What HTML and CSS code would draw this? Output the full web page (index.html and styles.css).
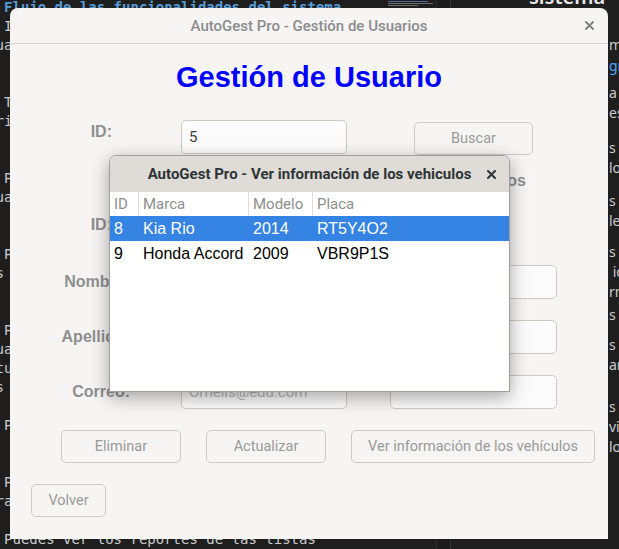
FILE: index.html
```html
<!DOCTYPE html>
<html lang="es">
<head>
<meta charset="utf-8">
<title>AutoGest Pro - Gestión de Usuarios</title>
<link rel="stylesheet" href="styles.css">
</head>
<body>
<div class="desktop">
  <div class="editor">
    <div class="code">
      <div class="minimap"><span class="mm-blue"></span><span class="mm-gray"></span><span class="mm-gray short"></span></div>
      <div class="code-lines">
        <div class="ln h"> Flujo de las funcionalidades del sistema</div>
        <div class="ln"> Inicia sesión en el sistema con tu usuario</div>
        <div class="ln">uario y contraseña registrados previamente.</div>
        <div class="ln"></div>
        <div class="ln"></div>
        <div class="ln"> Tras iniciar sesión accede al menú principal</div>
        <div class="ln">rio desde donde puedes gestionar los módulos.</div>
        <div class="ln"></div>
        <div class="ln"></div>
        <div class="ln"> Para registrar un nuevo usuario ingresa sus</div>
        <div class="ln">ua datos y presiona el botón Guardar.</div>
        <div class="ln"></div>
        <div class="ln"></div>
        <div class="ln"> Puedes buscar un usuario por su ID y modificar</div>
        <div class="ln">s datos.</div>
        <div class="ln"></div>
        <div class="ln"></div>
        <div class="ln"> Para eliminar un usuario selecciona el registro</div>
        <div class="ln">ua correspondiente y presiona el botón Eliminar,</div>
        <div class="ln">tu información se borrará del sistema junto con</div>
        <div class="ln">s vehículos asociados.</div>
        <div class="ln"></div>
        <div class="ln"> Puedes ver la información de los vehículos.</div>
        <div class="ln"></div>
        <div class="ln"></div>
        <div class="ln"> Para volver al menú principal presiona el botón</div>
        <div class="ln">ra Volver.</div>
        <div class="ln"></div>
        <div class="ln"> Puedes ver los reportes de las listas</div>
      </div>
    </div>
    <div class="gutter"></div>
    <div class="preview">
      <div class="pv-title">sistema</div>
      <p class="pv m26">mentar</p>
      <p class="pv m1 link">grama</p>
      <p class="pv m7">a el</p>
      <p class="pv">es</p>
      <p class="pv m15">s r</p>
      <p class="pv">lo</p>
      <p class="pv m13">s i</p>
      <p class="pv">le</p>
      <p class="pv m11">s g</p>
      <p class="pv"> id</p>
      <p class="pv">rm</p>
      <p class="pv m3">s g</p>
      <p class="pv m10">s e</p>
      <p class="pv">ar</p>
      <p class="pv m22">s v</p>
      <p class="pv">viz</p>
      <p class="pv">lo</p>
    </div>
  </div>

  <section class="window main-win">
    <header class="titlebar">
      <span></span>
      <span class="title">AutoGest Pro - Gestión de Usuarios</span>
      <span class="close"><svg width="9" height="9" viewBox="0 0 9 9"><path d="M1 1L8 8M8 1L1 8" stroke="#7e7e7e" stroke-width="1.8" stroke-linecap="round"/></svg></span>
    </header>
    <div class="win-body">
      <h1 class="heading">Gestión de Usuario</h1>
      <div class="form">
        <div class="lbl id-lbl ra">ID:</div>
        <div class="field rowa c2">5</div>
        <button class="btn search">Buscar</button>

        <div class="lbl sub">Nuevos datos</div>

        <div class="lbl id-lbl rc">ID:</div>

        <div class="lbl rd">Nombre:</div>
        <div class="field rd c2"></div>
        <div class="field wide rd c3"></div>

        <div class="lbl re">Apellido:</div>
        <div class="field re c2"></div>
        <div class="field wide re c3"></div>

        <div class="lbl rf">Correo:</div>
        <div class="field rf c2 ph">Ornelis@edu.com</div>
        <div class="field wide rf c3"></div>
      </div>
      <div class="actions">
        <button class="btn w120">Eliminar</button>
        <button class="btn w120">Actualizar</button>
        <button class="btn w244">Ver información de los vehículos</button>
      </div>
      <div class="back">
        <button class="btn w75">Volver</button>
      </div>
    </div>
  </section>

  <section class="window dialog">
    <header class="dlg-titlebar">
      <span></span>
      <span class="dlg-title">AutoGest Pro - Ver información de los vehiculos</span>
      <span class="dlg-close"><svg width="9" height="9" viewBox="0 0 9 9"><path d="M1 1L8 8M8 1L1 8" stroke="#2e3436" stroke-width="2" stroke-linecap="round"/></svg></span>
    </header>
    <table class="grid">
      <colgroup><col class="cid"><col class="cmarca"><col class="cmodelo"><col></colgroup>
      <thead>
        <tr><th>ID</th><th class="sep">Marca</th><th class="sep">Modelo</th><th class="sep">Placa</th></tr>
      </thead>
      <tbody>
        <tr class="sel"><td>8</td><td class="sep">Kia Rio</td><td class="sep">2014</td><td class="sep">RT5Y4O2</td></tr>
        <tr><td>9</td><td class="sep">Honda Accord</td><td class="sep">2009</td><td class="sep">VBR9P1S</td></tr>
      </tbody>
    </table>
  </section>
</div>
</body>
</html>
```

FILE: styles.css
```css
* { box-sizing: border-box; margin: 0; padding: 0; }
html, body { width: 619px; height: 549px; overflow: hidden; }
body { background: #1e1e1e; font-family: Roboto, "Noto Sans", sans-serif; }

.desktop { position: relative; width: 619px; height: 549px; overflow: hidden; }

/* background editor */
.editor { display: flex; height: 549px; }
.code { position: relative; width: 437px; flex: none; border-right: 1px solid #2e2e2e; overflow: hidden; }
.code-lines { margin: -2px 0 0 -4.4px; font: 14px/19px "DejaVu Sans Mono", monospace; color: #cccccc; }
.ln { height: 19px; white-space: pre; }
.ln.h { color: #569cd6; font-weight: bold; }
.minimap { position: absolute; left: 388px; top: 0; width: 45px; height: 7px; display: flex; flex-direction: column; gap: 1px; padding-top: 1px; }
.minimap span { display: block; height: 1px; }
.mm-blue { background: #4a6f95; width: 40px; }
.mm-gray { background: #6a6a6a; width: 45px; }
.mm-gray.short { width: 30px; }
.gutter { width: 14px; flex: none; border-right: 1px solid #333333; background: #1b1b1b; }
.preview { flex: 1; padding-left: 158px; font: 14px/20px "Noto Sans", sans-serif; color: #cccccc; overflow: hidden; }
.pv-title { margin: -15px 0 0 -80px; font: 600 20px/24px "Noto Sans", sans-serif; color: #e8e8e8; white-space: nowrap; }
.pv { height: 20px; white-space: pre; }
.pv.link { color: #4daafc; }
.m1 { margin-top: 1px; } .m3 { margin-top: 3px; } .m7 { margin-top: 7px; } .m10 { margin-top: 10px; }
.m11 { margin-top: 11px; } .m13 { margin-top: 13px; } .m15 { margin-top: 15px; } .m22 { margin-top: 22px; }
.m26 { margin-top: 26px; }

/* windows */
.window { position: absolute; background: #f6f5f4; }
.main-win { left: 10px; top: 8px; width: 598px; height: 531px; border-radius: 8px 8px 0 0; overflow: hidden; }
.titlebar { height: 36px; border-bottom: 1px solid #d9d5d1; display: grid; grid-template-columns: 1fr auto 1fr; align-items: center; }
.title { font: 500 15px Roboto, sans-serif; color: #8c8c8c; }
.close { justify-self: end; margin-right: 14px; display: flex; }

.win-body { padding-top: 18px; }
.heading { font: bold 29px/30px "Liberation Sans", Arial, sans-serif; color: #0000ff; text-align: center; }

.form { display: grid; grid-template-columns: 141px 209px 167px; grid-template-rows: 34px 20px 28px 34px 34px 34px; row-gap: 21px; margin: 28px 0 0 30px; }
.lbl { font: bold 16px/18px "Liberation Sans", Arial, sans-serif; color: #8f8f8f; justify-self: end; align-self: center; margin-right: 51px; grid-column: 1; white-space: nowrap; }
.id-lbl { margin-right: 69px; }
.ra { grid-row: 1; align-self: start; margin-top: 3px; }
.rc { grid-row: 3; align-self: start; }
.sub { grid-row: 2; grid-column: 3; justify-self: center; align-self: start; margin: -3px 0 0 0; }
.rd { grid-row: 4; } .re { grid-row: 5; } .rf { grid-row: 6; }
.rowa { grid-row: 1; }
.c2 { grid-column: 2; } .c3 { grid-column: 3; }

.field { width: 166px; height: 34px; border: 1px solid #cfc9c4; border-radius: 5px; background: #fbfbfb; padding-left: 7px; display: flex; align-items: center; font: 15px Roboto, sans-serif; color: #3c3c3c; }
.field.wide { width: 167px; }
.field.ph { color: #b8b8b8; }

.btn { height: 33px; border: 1px solid #cfc9c4; border-radius: 5px; background: #f6f5f4; color: #9a9a9a; font: 14.5px Roboto, sans-serif; }
.search { grid-row: 1; grid-column: 3; width: 119px; justify-self: center; align-self: start; margin-top: 2px; }
.actions { display: flex; gap: 25px; margin-top: 21px; padding-left: 51px; }
.w120 { width: 120px; }
.w244 { width: 244px; }
.back { margin: 21px 0 0 21px; }
.w75 { width: 75px; }

/* dialog */
.dialog { left: 109px; top: 155px; width: 401px; height: 237px; background: #ffffff; border: 1px solid #a29d98; border-radius: 7px 7px 0 0; box-shadow: 0 5px 18px rgba(0,0,0,0.35); overflow: hidden; }
.dlg-titlebar { height: 36px; background: #dfdbd7; display: grid; grid-template-columns: 1fr auto 1fr; align-items: center; }
.dlg-title { font: 700 15px Roboto, sans-serif; color: #2e3436; white-space: nowrap; }
.dlg-close { justify-self: end; margin-right: 13px; display: flex; }

.grid { width: 100%; border-collapse: separate; border-spacing: 0; table-layout: fixed; }
.cid { width: 28px; } .cmarca { width: 110px; } .cmodelo { width: 64px; }
.grid th, .grid td { padding: 0 0 0 4px; text-align: left; white-space: nowrap; overflow: hidden; }
.grid th { height: 24px; font: 400 15px Roboto, sans-serif; color: #8e8e8e; }
.grid td { height: 25px; font: 16px "Liberation Sans", Arial, sans-serif; color: #000000; }
.grid .sep { border-left: 1px solid transparent; }
.grid th.sep { border-left-color: #dddddd; }
.grid tr.sel td { background: #3584e4; color: #ffffff; }
```
